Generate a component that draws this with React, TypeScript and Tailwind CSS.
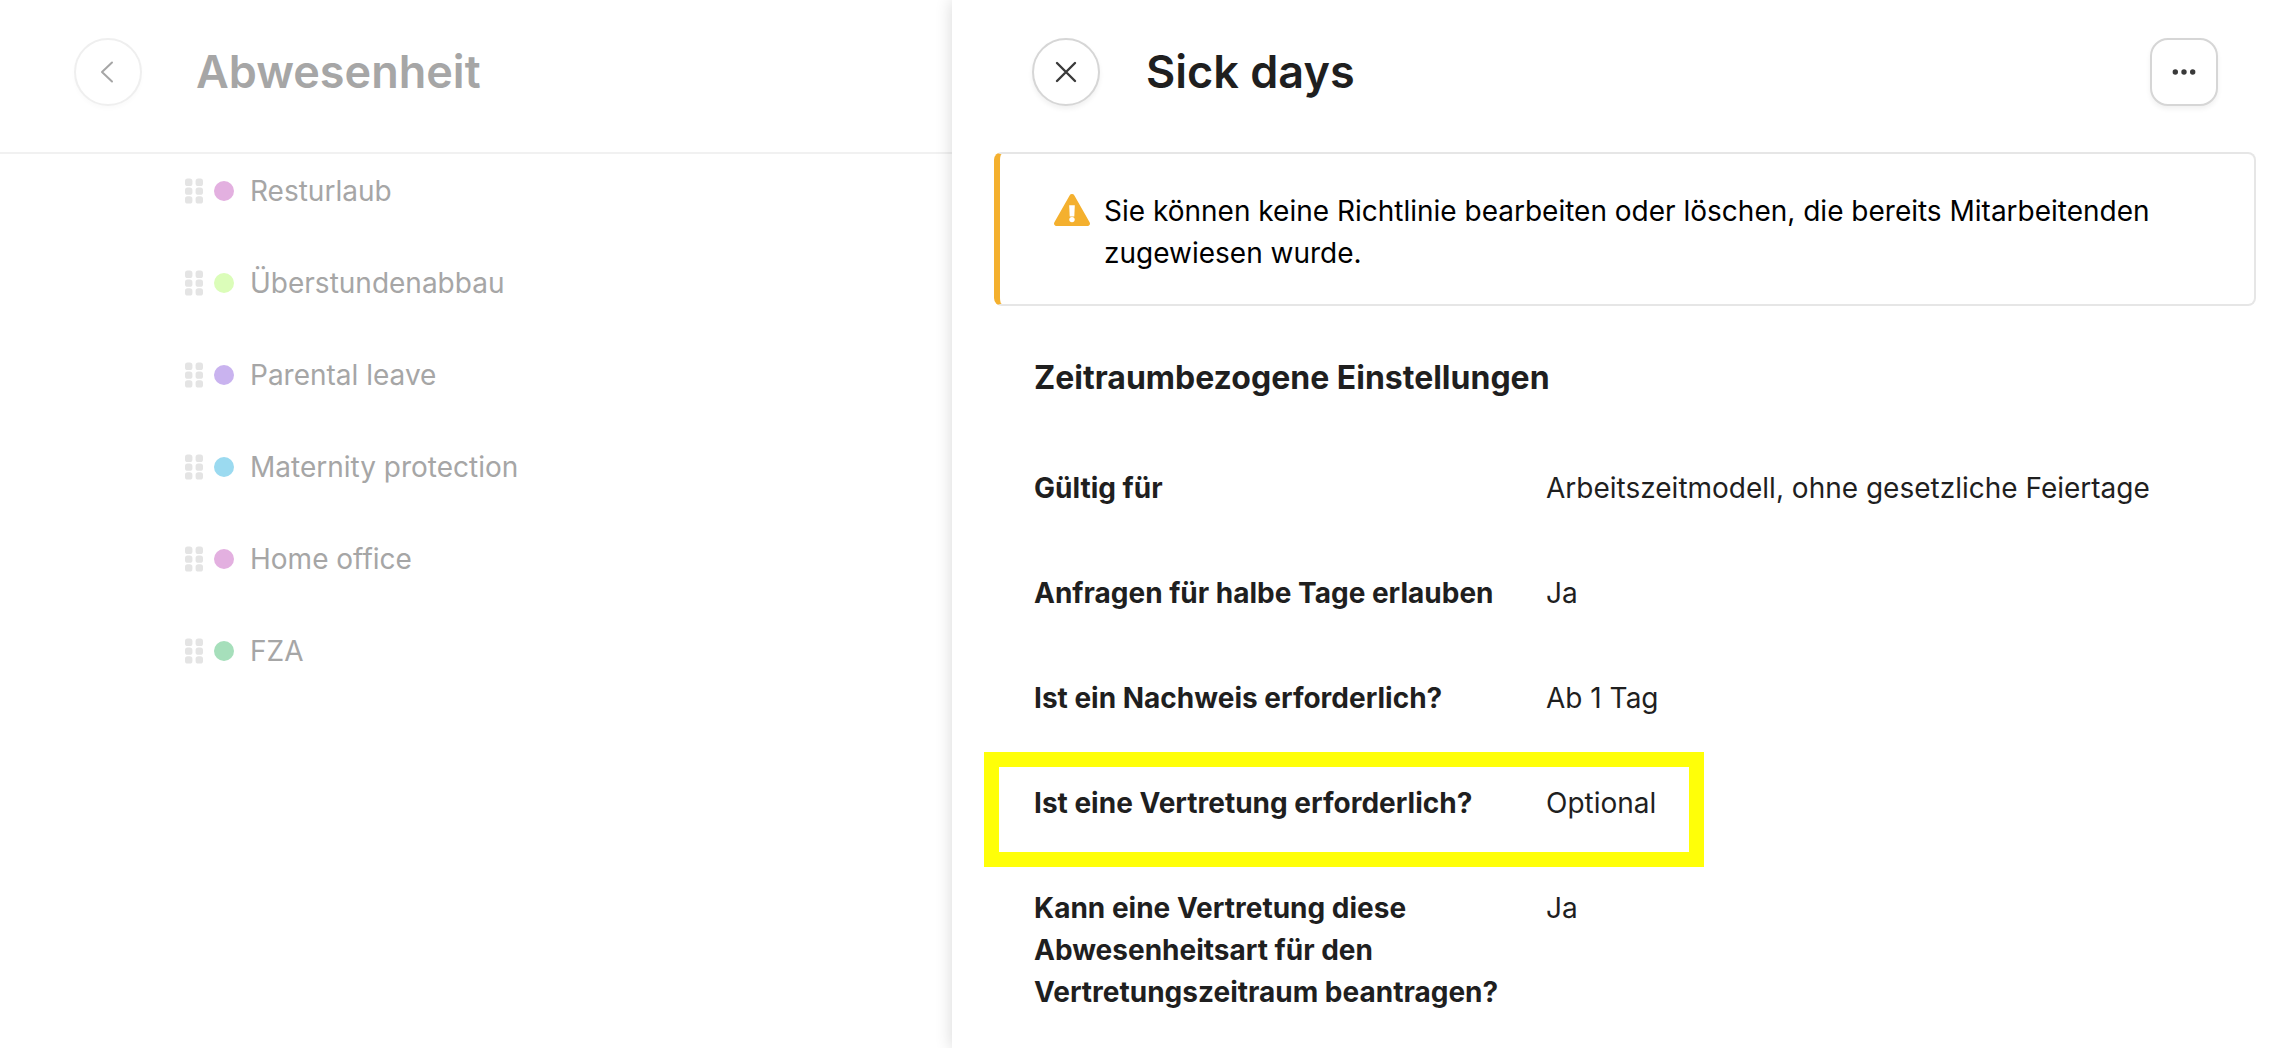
const absenceTypes = [
  { name: "Resturlaub", dot: "bg-[#e3b0e0]" },
  { name: "Überstundenabbau", dot: "bg-[#dbfdb9]" },
  { name: "Parental leave", dot: "bg-[#c9b3ef]" },
  { name: "Maternity protection", dot: "bg-[#9bdaf0]" },
  { name: "Home office", dot: "bg-[#e3b0e0]" },
  { name: "FZA", dot: "bg-[#a6dfbb]" },
];

const settings = [
  { label: "Gültig für", value: "Arbeitszeitmodell, ohne gesetzliche Feiertage" },
  { label: "Anfragen für halbe Tage erlauben", value: "Ja" },
  { label: "Ist ein Nachweis erforderlich?", value: "Ab 1 Tag" },
  { label: "Ist eine Vertretung erforderlich?", value: "Optional", highlighted: true },
  {
    label: "Kann eine Vertretung diese Abwesenheitsart für den Vertretungszeitraum beantragen?",
    value: "Ja",
  },
];

function DragHandle() {
  return (
    <svg width="18" height="26" viewBox="0 0 18 26" fill="#e4e4e4" aria-hidden="true">
      {[0.6, 9.4, 18.2].map((y) => (
        <g key={y}>
          <rect x="0" y={y} width="7.4" height="7.4" rx="2.6" />
          <rect x="10.6" y={y} width="7.4" height="7.4" rx="2.6" />
        </g>
      ))}
    </svg>
  );
}

function AbsenceList() {
  return (
    <main className="min-w-0 flex-1">
      <header className="flex h-[154px] items-start border-b-2 border-[#f1f1f1] pt-[38px] pl-[74px]">
        <button
          aria-label="Zurück"
          className="flex size-[68px] items-center justify-center rounded-full border-2 border-[#efefef] bg-white shadow-[0_3px_4px_rgba(0,0,0,0.02)]"
        >
          <svg width="24" height="24" viewBox="0 0 24 24" fill="none" stroke="#a6a6a6" strokeWidth="2" strokeLinecap="round" strokeLinejoin="round">
            <path d="M16 2.5 6 12l10 9.5" />
          </svg>
        </button>
        <h1 className="ml-[54px] text-[45px] leading-[68px] font-semibold text-[#a6a6a6]">Abwesenheit</h1>
      </header>
      <ul className="flex flex-col gap-[50px] pt-[16px] pl-[185px]">
        {absenceTypes.map((type) => (
          <li key={type.name} className="flex items-center text-[28px] leading-[42px] text-[#a6a6a6]">
            <DragHandle />
            <span className={`mr-[16px] ml-[11px] size-[20px] rounded-full ${type.dot}`} />
            {type.name}
          </li>
        ))}
      </ul>
    </main>
  );
}

function PolicyPanel() {
  return (
    <aside className="w-[58.5%] shrink-0 bg-white shadow-[0_0_16px_rgba(0,0,0,0.16)]">
      <header className="flex items-start pt-[38px] pr-[76px] pl-[80px]">
        <button
          aria-label="Schließen"
          className="flex size-[68px] items-center justify-center rounded-full border-2 border-[#d6d6d6] bg-white shadow-[0_3px_5px_rgba(0,0,0,0.06)]"
        >
          <svg width="24" height="24" viewBox="0 0 24 24" fill="none" stroke="#3a3a3a" strokeWidth="2.4" strokeLinecap="round">
            <path d="M3 3l18 18M21 3 3 21" />
          </svg>
        </button>
        <h2 className="ml-[46px] text-[45px] leading-[68px] font-semibold text-[#1f1f1f]">Sick days</h2>
        <button
          aria-label="Weitere Aktionen"
          className="ml-auto flex size-[68px] items-center justify-center rounded-[18px] border-2 border-[#d6d6d6] bg-white shadow-[0_3px_5px_rgba(0,0,0,0.06)]"
        >
          <svg width="24" height="24" viewBox="0 0 24 24" fill="#3a3a3a">
            <circle cx="3.3" cy="12" r="2.7" />
            <circle cx="12" cy="12" r="2.7" />
            <circle cx="20.7" cy="12" r="2.7" />
          </svg>
        </button>
      </header>

      <div
        role="alert"
        className="mt-[46px] mr-[38px] ml-[42px] flex items-start rounded-lg border-2 border-l-[6px] border-[#e6e6e6] border-l-[#f4b02e] pt-[36px] pr-[80px] pb-[30px] pl-[54px]"
      >
        <svg className="mt-[4px] mr-[14px] shrink-0" width="36" height="32" viewBox="0 0 36 32" aria-hidden="true">
          <path d="M15.6 1.4a2.8 2.8 0 0 1 4.8 0l15.2 26.8A2.5 2.5 0 0 1 33.4 32H2.6a2.5 2.5 0 0 1-2.2-3.8z" fill="#f4b02e" />
          <path d="M15.2 11.2h5.6l-.5 11.2h-4.6z" fill="#fff" />
          <circle cx="18" cy="25.6" r="2.7" fill="#fff" />
        </svg>
        <p className="text-[28px] leading-[42px] text-black">
          Sie können keine Richtlinie bearbeiten oder löschen, die bereits Mitarbeitenden zugewiesen wurde.
        </p>
      </div>

      <section className="pt-[48px] pr-[76px] pb-[36px] pl-[82px] text-[#1f1f1f]">
        <h3 className="text-[32px] leading-[48px] font-bold">Zeitraumbezogene Einstellungen</h3>
        <dl className="mt-[65px] flex flex-col gap-[63px] text-[28px] leading-[42px]">
          {settings.map((item) => (
            <div key={item.label} className="relative grid grid-cols-[512px_1fr]">
              <dt className="pr-[40px] font-bold">{item.label}</dt>
              <dd>{item.value}</dd>
              {item.highlighted && (
                <span className="pointer-events-none absolute -top-[30px] -left-[50px] h-[115px] w-[720px] border-[15px] border-[#ffff08]" />
              )}
            </div>
          ))}
        </dl>
      </section>
    </aside>
  );
}

export default function App() {
  return (
    <div className="flex min-h-screen overflow-hidden bg-white font-['Inter',sans-serif]">
      <AbsenceList />
      <PolicyPanel />
    </div>
  );
}
